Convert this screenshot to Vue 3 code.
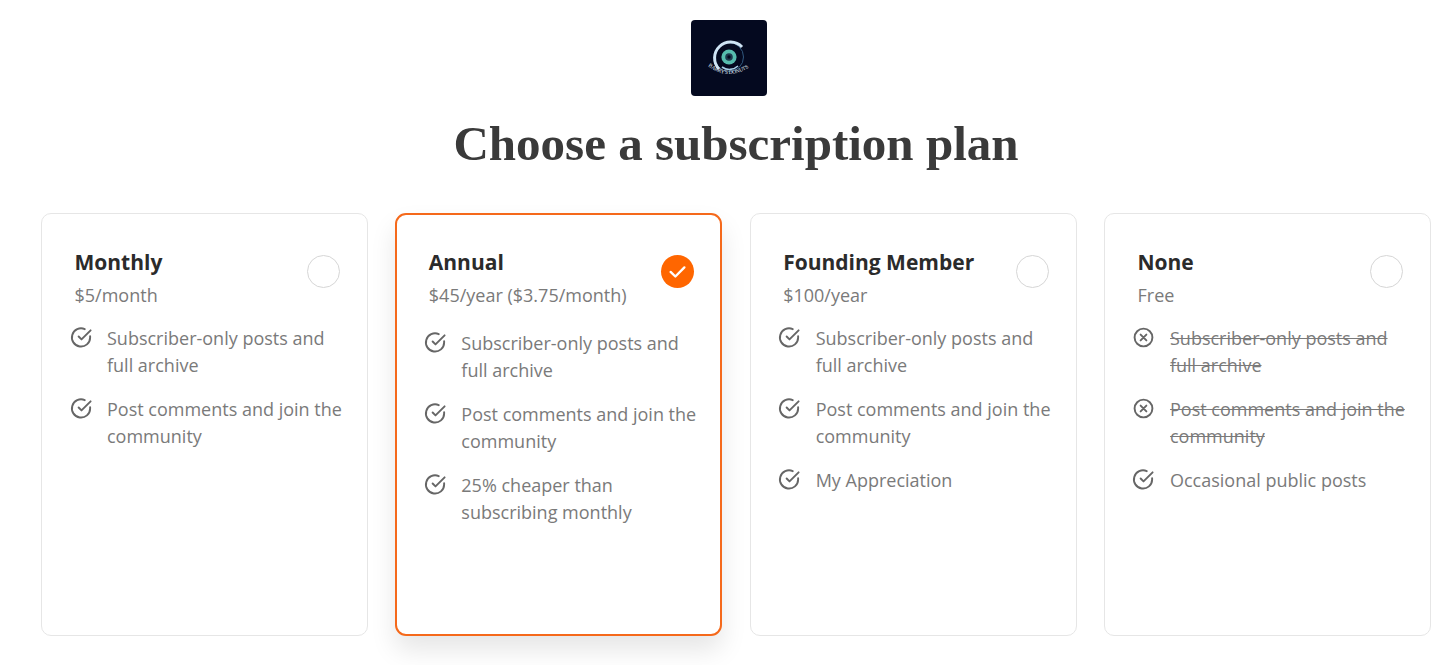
<script setup>
const plans = [
  { name: 'Monthly', price: '$5/month', features: [
    { lines: ['Subscriber-only posts and', 'full archive'] },
    { lines: ['Post comments and join the', 'community'] },
  ] },
  { name: 'Annual', price: '$45/year ($3.75/month)', selected: true, features: [
    { lines: ['Subscriber-only posts and', 'full archive'] },
    { lines: ['Post comments and join the', 'community'] },
    { lines: ['25% cheaper than', 'subscribing monthly'] },
  ] },
  { name: 'Founding Member', price: '$100/year', features: [
    { lines: ['Subscriber-only posts and', 'full archive'] },
    { lines: ['Post comments and join the', 'community'] },
    { lines: ['My Appreciation'] },
  ] },
  { name: 'None', price: 'Free', features: [
    { lines: ['Subscriber-only posts and', 'full archive'], off: true },
    { lines: ['Post comments and join the', 'community'], off: true },
    { lines: ['Occasional public posts'] },
  ] },
]
</script>

<template>
  <main class="page">
    <div class="logo">
      <svg viewBox="0 0 76 76" width="76" height="76">
        <defs>
          <path id="logoarc" d="M17 46 Q38 62 60 46" fill="none" />
        </defs>
        <circle cx="38" cy="37" r="14.5" fill="none" stroke="#31597f" stroke-width="1" />
        <path d="M51 27 A15.5 15.5 0 0 0 28 49" fill="none" stroke="#cfe4f4" stroke-width="3" />
        <path d="M47 46 A12.5 12.5 0 0 1 31 47" fill="none" stroke="#a6cde6" stroke-width="1.6" />
        <circle cx="38" cy="37" r="7.6" fill="#56bcae" />
        <circle cx="38" cy="37" r="3.8" fill="#1d3a4e" />
        <circle cx="38" cy="37" r="1.7" fill="#04091f" />
        <text class="logo-text"><textPath href="#logoarc" textLength="44">BARRY'S DONUTS</textPath></text>
      </svg>
    </div>
    <h1 class="title">Choose a subscription plan</h1>
    <section class="plans">
      <article v-for="p in plans" :key="p.name" class="card" :class="{ selected: p.selected }">
        <header class="head">
          <div>
            <h2 class="name">{{ p.name }}</h2>
            <div class="price">{{ p.price }}</div>
          </div>
          <span class="radio" :class="{ on: p.selected }">
            <svg v-if="p.selected" viewBox="0 0 16 16" width="19" height="19">
              <path d="M2.2 8.4 6.2 12.2 13.8 4.6" fill="none" stroke="#fff" stroke-width="2" stroke-linecap="round" stroke-linejoin="round" />
            </svg>
          </span>
        </header>
        <ul class="features">
          <li v-for="(f, i) in p.features" :key="i" class="feature">
            <svg class="ficon" viewBox="0 0 24 24" width="23" height="23">
              <template v-if="f.off">
                <circle cx="12" cy="12" r="9.3" fill="none" stroke="#666" stroke-width="2" />
                <path d="M9 9l6 6M15 9l-6 6" fill="none" stroke="#666" stroke-width="2" stroke-linecap="round" />
              </template>
              <template v-else>
                <path d="M21 10.6V12a9.5 9.5 0 1 1-5.6-8.7" fill="none" stroke="#666" stroke-width="2" stroke-linecap="round" />
                <path d="M21.5 4.5 12 14l-3-3" fill="none" stroke="#666" stroke-width="2" stroke-linecap="round" stroke-linejoin="round" />
              </template>
            </svg>
            <span class="ftext" :class="{ off: f.off }">
              <span v-for="l in f.lines" :key="l" class="line">{{ l }}</span>
            </span>
          </li>
        </ul>
      </article>
    </section>
  </main>
</template>

<style>
html, body { margin: 0; background: #fff; }
</style>

<style scoped>
.page {
  box-sizing: border-box;
  height: 665px;
  overflow: hidden;
  padding: 20px 25px 0 41px;
  display: flex;
  flex-direction: column;
  font-family: "Open Sans", "Noto Sans", sans-serif;
}
.logo {
  width: 76px;
  height: 76px;
  align-self: center;
  margin-right: 14px;
  background: #04091f;
  border-radius: 4px;
  overflow: hidden;
}
.logo svg { display: block; }
.logo-text {
  font-family: "Liberation Serif", serif;
  font-size: 5.5px;
  fill: #e2edf6;
}
.title {
  margin: 22px 0 0;
  height: 52px;
  line-height: 52px;
  text-align: center;
  font-family: "Liberation Serif", serif;
  font-size: 49px;
  font-weight: 700;
  color: #3a3a3a;
}
.plans {
  margin-top: 43px;
  display: grid;
  grid-template-columns: repeat(4, 327px);
  column-gap: 27.33px;
}
.card {
  box-sizing: border-box;
  height: 423px;
  background: #fff;
  border: 1px solid #e6e6e6;
  border-radius: 10px;
  padding: 32px 24px 0 32.5px;
}
.card.selected {
  border: 2px solid #f5691b;
  border-radius: 11px;
  padding: 31px 23px 0 31.5px;
  box-shadow: 0 14px 26px rgba(0, 0, 0, 0.1);
}
.head {
  display: flex;
  justify-content: space-between;
  align-items: flex-start;
  padding-right: 3px;
}
.name {
  margin: 0;
  font-size: 21px;
  line-height: 32px;
  font-weight: 700;
  color: #2b2b2b;
}
.price {
  font-size: 18px;
  line-height: 26px;
  color: #7a7a7a;
  margin-top: 4px;
}
.radio {
  box-sizing: border-box;
  width: 33px;
  height: 33px;
  margin-top: 9px;
  border: 1.5px solid #d6d6d6;
  border-radius: 50%;
  display: flex;
  align-items: center;
  justify-content: center;
}
.radio.on { background: #ff6600; border: 0; }
.features {
  list-style: none;
  margin: 17px 0 0 -5px;
  padding: 0;
  display: flex;
  flex-direction: column;
  gap: 17px;
}
.selected .features { margin-top: 22px; }
.feature {
  display: flex;
  gap: 14.5px;
  align-items: flex-start;
  margin-right: -12px;
}
.ficon { flex: none; margin-top: 1px; }
.ftext {
  font-size: 18px;
  line-height: 27px;
  color: #7a7a7a;
}
.line { display: block; white-space: nowrap; }
.ftext.off .line { text-decoration: line-through; }
</style>
